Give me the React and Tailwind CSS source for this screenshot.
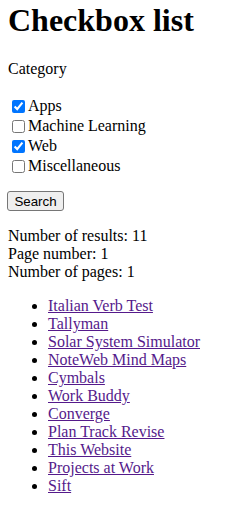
import React from "react";

const CATEGORIES = [
  { name: "Apps", checked: true },
  { name: "Machine Learning", checked: false },
  { name: "Web", checked: true },
  { name: "Miscellaneous", checked: false },
];

const RESULTS = [
  "Italian Verb Test",
  "Tallyman",
  "Solar System Simulator",
  "NoteWeb Mind Maps",
  "Cymbals",
  "Work Buddy",
  "Converge",
  "Plan Track Revise",
  "This Website",
  "Projects at Work",
  "Sift",
];

export default function App() {
  return (
    <div className="px-2 pt-[2px] pb-2 bg-white text-black text-base leading-[normal] font-['Liberation_Serif','Times_New_Roman',serif]">
      <h1 className="text-[32px] font-bold leading-[normal] mb-[21px]">Checkbox list</h1>

      <form>
        <p className="mb-[18px]">Category</p>

        <div>
          {CATEGORIES.map((c) => (
            <div key={c.name} className="flex items-center h-5">
              <input
                type="checkbox"
                defaultChecked={c.checked}
                className="w-[13px] h-[13px] ml-1 mr-[3px] accent-[#0075ff]"
              />
              <label>{c.name}</label>
            </div>
          ))}
        </div>

        <button
          type="button"
          className="mt-[15px] -ml-px w-[57px] h-5 flex items-center justify-center bg-[#efefef] border border-[#767676] rounded-[3px] text-[13.33px] text-black font-['Liberation_Sans',Arial,sans-serif]"
        >
          Search
        </button>
      </form>

      <div className="mt-4">
        <div>Number of results: 11</div>
        <div>Page number: 1</div>
        <div>Number of pages: 1</div>
      </div>

      <ul className="mt-4 pl-10 list-disc">
        {RESULTS.map((r) => (
          <li key={r}>
            <a href="#" className="text-[#551a8b] underline">
              {r}
            </a>
          </li>
        ))}
      </ul>
    </div>
  );
}
